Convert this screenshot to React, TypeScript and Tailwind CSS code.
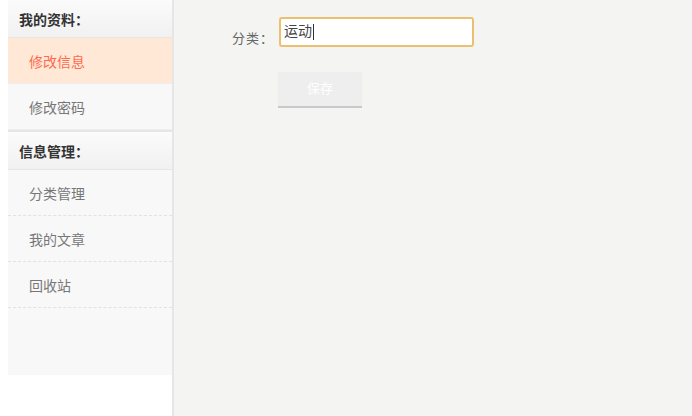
import React from "react";

const font = { fontFamily: '"Liberation Sans", "Noto Sans CJK SC", sans-serif' };

function Header({ text }: { text: string }) {
  return (
    <div className="h-[38px] flex items-center pl-[11px] pt-[3px] text-[14px] font-bold text-[#333] bg-gradient-to-b from-[#fbfbfb] to-[#f1f1f1] border-b border-[#e6e6e6]">
      {text}
    </div>
  );
}

function Item({ text, active, dashed }: { text: string; active?: boolean; dashed?: boolean }) {
  return (
    <div
      className={`h-[46px] flex items-center pl-[21px] pt-[4px] text-[14px] ${
        active ? "bg-[#ffe8d6] text-[#ff6a4d]" : "bg-[#f8f8f8] text-[#777]"
      } ${dashed ? "border-b border-dashed border-[#e2e2e2]" : "border-b border-[#eeeeee]"}`}
    >
      {text}
    </div>
  );
}

export default function App() {
  return (
    <div className="w-[692px] h-[416px] flex bg-white overflow-hidden" style={font}>
      <div className="w-[8px] shrink-0 bg-white" />
      <div className="w-[164px] shrink-0 flex flex-col">
        <Header text="我的资料：" />
        <Item text="修改信息" active />
        <Item text="修改密码" />
        <div className="h-[2px] bg-[#e6e6e6]" />
        <Header text="信息管理：" />
        <Item text="分类管理" dashed />
        <Item text="我的文章" dashed />
        <Item text="回收站" dashed />
        <div className="h-[67px] bg-[#f8f8f8]" />
        <div className="flex-1 bg-white" />
      </div>
      <div className="w-[2px] shrink-0 bg-[#e6e6e6]" />
      <div className="flex-1 bg-[#f4f4f3] pl-[58px] pt-[15px]">
        <div className="flex items-center">
          <span className="text-[13px] text-[#666] mt-[14px] mr-[5px] tracking-[1px]">分类：</span>
          <div className="w-[195px] h-[30px] bg-white border-2 border-[#ebc16f] rounded-[3px] flex items-center pl-[3px] text-[14px] text-[#444]">
            运动<span className="inline-block w-[1px] h-[16px] bg-[#333] ml-[1px]" />
          </div>
        </div>
        <div className="ml-[46px] mt-[23px] w-[84px] h-[36px] bg-[#eeeeee] border-b-2 border-[#c9c9c9] flex items-center justify-center text-white text-[13px]">
          保存
        </div>
      </div>
    </div>
  );
}
